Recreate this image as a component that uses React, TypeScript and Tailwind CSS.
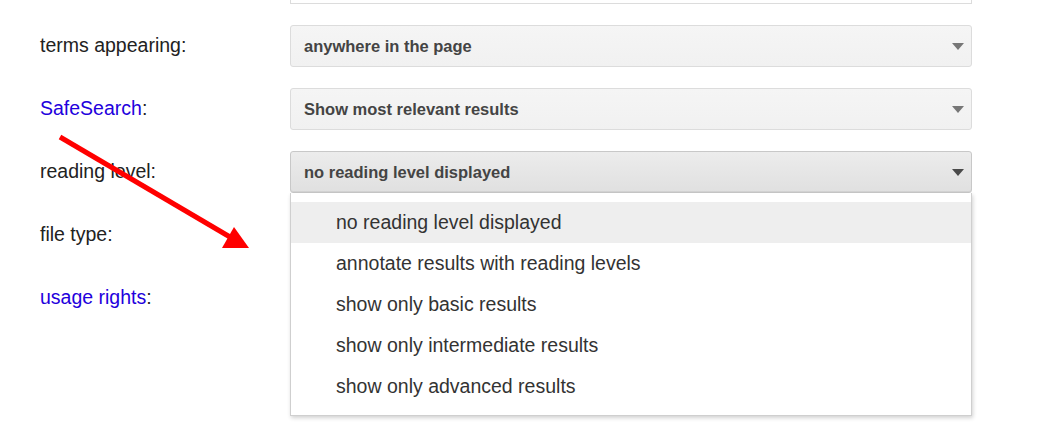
import React from 'react';

const rows = [
  { label: 'terms appearing', link: false, value: 'anywhere in the page' },
  { label: 'SafeSearch', link: true, value: 'Show most relevant results' },
  { label: 'reading level', link: false, value: 'no reading level displayed', open: true },
  { label: 'file type', link: false, value: '' },
  { label: 'usage rights', link: true, value: '' },
];

const options = [
  'no reading level displayed',
  'annotate results with reading levels',
  'show only basic results',
  'show only intermediate results',
  'show only advanced results',
];

function Caret({ dark }: { dark?: boolean }) {
  return (
    <svg width="12" height="7" viewBox="0 0 12 7" className="shrink-0">
      <path d="M0 0h12L6 7z" fill={dark ? '#4a4a4a' : '#777'} />
    </svg>
  );
}

export default function App() {
  return (
    <div className="relative w-[1044px] h-[427px] overflow-hidden bg-white font-['Liberation_Sans',Arial,sans-serif]">
      <div className="flex flex-col gap-[21px] -mt-[38px]">
        {/* search box from the row above */}
        <div className="flex items-center">
          <div className="w-[290px] shrink-0" />
          <div className="w-[682px] h-[42px] border border-[#dcdcdc] bg-white" />
        </div>

        {rows.map((row) => (
          <div key={row.label} className="flex items-center">
            <div className="w-[290px] shrink-0 pl-[40px] text-[19.5px] text-[#222]">
              <span className={row.link ? 'text-[#2200dd]' : ''}>{row.label}</span>:
            </div>
            {row.value ? (
              <div
                className={
                  row.open
                    ? 'w-[682px] h-[42px] flex items-center justify-between pl-[13px] pr-[7px] rounded-[3px] border border-[#c8c8c8] bg-gradient-to-b from-[#ececec] to-[#e0e0e0] shadow-[inset_0_-1px_0_#d4d4d4]'
                    : 'w-[682px] h-[42px] flex items-center justify-between pl-[13px] pr-[7px] rounded-[3px] border border-[#dcdcdc] bg-gradient-to-b from-[#f5f5f5] to-[#f1f1f1]'
                }
              >
                <span className="text-[16.5px] font-bold text-[#444]">{row.value}</span>
                <Caret dark={row.open} />
              </div>
            ) : (
              // hidden behind the open menu
              <div className="w-[682px] h-[42px]" />
            )}
          </div>
        ))}
      </div>

      {/* open reading level menu */}
      <div className="absolute left-[290px] top-[193px] w-[682px] h-[223px] bg-white border border-[#cfcfcf] border-t-0 shadow-[1px_2px_4px_rgba(0,0,0,0.18)] pt-[9px]">
        {options.map((opt, i) => (
          <div
            key={opt}
            className={
              i === 0
                ? 'h-[41px] flex items-center pl-[45px] text-[19.5px] text-[#333] bg-[#eeeeee]'
                : 'h-[41px] flex items-center pl-[45px] text-[19.5px] text-[#333]'
            }
          >
            {opt}
          </div>
        ))}
      </div>

      {/* red annotation arrow */}
      <svg className="absolute left-0 top-0 pointer-events-none" width="1044" height="427">
        <line x1="60" y1="137" x2="230" y2="237" stroke="#ff0000" strokeWidth="5" />
        <polygon points="249,248 222,248 234,227" fill="#ff0000" />
      </svg>
    </div>
  );
}
